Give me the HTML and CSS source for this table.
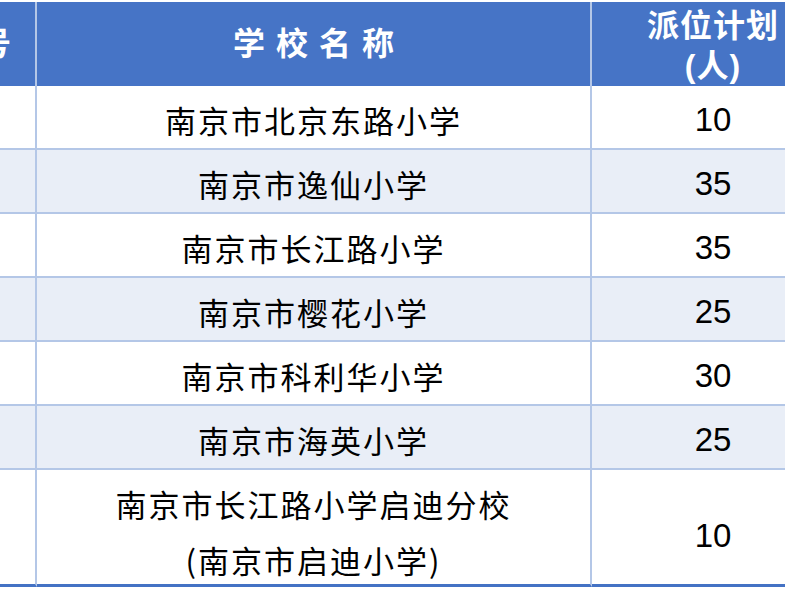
FILE: index.html
```html
<!DOCTYPE html>
<html lang="zh-CN">
<head>
<meta charset="utf-8">
<title>派位计划</title>
<link rel="stylesheet" href="styles.css">
</head>
<body>
<div class="viewport">
  <table class="plan">
    <colgroup>
      <col class="c-no">
      <col class="c-name">
      <col class="c-num">
    </colgroup>
    <thead>
      <tr>
        <th class="h-no">序号</th>
        <th class="h-name">学校名称</th>
        <th class="h-num">派位计划<br>(人)</th>
      </tr>
    </thead>
    <tbody>
      <tr><td class="no"></td><td class="name">南京市北京东路小学</td><td class="num">10</td></tr>
      <tr class="alt"><td class="no"></td><td class="name">南京市逸仙小学</td><td class="num">35</td></tr>
      <tr><td class="no"></td><td class="name">南京市长江路小学</td><td class="num">35</td></tr>
      <tr class="alt"><td class="no"></td><td class="name">南京市樱花小学</td><td class="num">25</td></tr>
      <tr><td class="no"></td><td class="name">南京市科利华小学</td><td class="num">30</td></tr>
      <tr class="alt"><td class="no"></td><td class="name">南京市海英小学</td><td class="num">25</td></tr>
      <tr class="last"><td class="no"></td><td class="name tall"><div class="lines">南京市长江路小学启迪分校<br>(南京市启迪小学)</div></td><td class="num num-tall">10</td></tr>
    </tbody>
  </table>
</div>
</body>
</html>
```

FILE: styles.css
```css
html, body {
  margin: 0;
  padding: 0;
  background: #ffffff;
}

.viewport {
  width: 785px;
  height: 589px;
  overflow: hidden;
  background: #ffffff;
}

.plan {
  margin: 2px 0 0 -88px;
  border-collapse: separate;
  border-spacing: 0;
  table-layout: fixed;
  width: 922px;
}

.c-no { width: 125px; }
.c-name { width: 555px; }
.c-num { width: 242px; }

.plan th,
.plan td {
  box-sizing: border-box;
  border-right: 2px solid #b4c7e7;
  text-align: center;
  vertical-align: top;
  padding: 0;
}

.plan th:last-child,
.plan td:last-child {
  border-right: none;
}

.plan thead th {
  height: 84px;
  vertical-align: middle;
  background: #4674c6;
  color: #ffffff;
  font-family: "Liberation Sans", "Noto Sans CJK SC", sans-serif;
  font-weight: 700;
  font-size: 32px;
  line-height: 40px;
}

.plan th.h-no,
.plan th.h-name {
  letter-spacing: 11px;
  text-indent: 11px;
}

.plan th.h-num {
  letter-spacing: 1px;
  padding-top: 4px;
}

.plan tbody td {
  height: 64px;
  border-bottom: 2px solid #b4c7e7;
  color: #000000;
  background: #ffffff;
}

.plan tbody tr.alt td {
  background: #e9eef7;
}

.plan tbody tr.last td {
  height: 117px;
  border-bottom: 3px solid #4472c4;
}

.plan td.name {
  font-family: "Noto Sans CJK SC", sans-serif;
  font-size: 31px;
  letter-spacing: 2px;
  line-height: 44px;
  padding: 12px 0 6px;
}

.plan td.name.tall {
  padding: 6px 0 0;
}

.lines {
  height: 108px;
  line-height: 56px;
}

.plan td.num {
  font-family: "Liberation Sans", Arial, sans-serif;
  font-size: 33px;
  line-height: 40px;
  padding: 14px 0 8px;
}

.plan td.num.num-tall {
  padding: 46px 0 0;
}
```
